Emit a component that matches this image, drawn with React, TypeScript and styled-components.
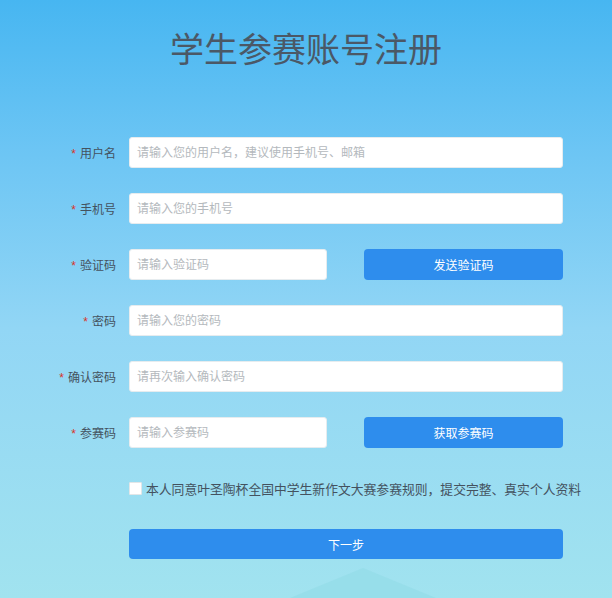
import React, { useState } from "react";
import styled, { createGlobalStyle } from "styled-components";

const GlobalStyle = createGlobalStyle`
  html, body {
    margin: 0;
    padding: 0;
  }
  body {
    font-family: "Liberation Sans", "Noto Sans CJK SC", sans-serif;
  }
  * {
    box-sizing: border-box;
  }
`;

const Page = styled.div`
  position: relative;
  width: 612px;
  height: 598px;
  overflow: hidden;
  background: linear-gradient(180deg, #47b6f1 0%, #6cc5f4 25%, #92d6f5 55%, #a1e3ef 100%);
`;

const Backdrop = styled.svg`
  position: absolute;
  left: 0;
  bottom: 0;
  width: 612px;
  height: 40px;
  pointer-events: none;
`;

const Title = styled.h1`
  margin: 0;
  padding-top: 31px;
  text-align: center;
  font-size: 34px;
  line-height: 38px;
  font-weight: 400;
  color: #4b5866;
`;

const Form = styled.form`
  position: relative;
  display: flex;
  flex-direction: column;
  gap: 25px;
  padding: 68px 0 0;
`;

const Row = styled.div`
  display: grid;
  grid-template-columns: 116px 434px;
  column-gap: 13px;
  align-items: center;
  height: 31px;
`;

const Label = styled.label`
  text-align: right;
  font-size: 12px;
  color: #44525f;
  white-space: nowrap;
`;

const Star = styled.span`
  color: #d8352a;
  margin-right: 4px;
  font-size: 12px;
`;

const Field = styled.div<{ $split?: boolean }>`
  display: grid;
  grid-template-columns: ${(p) => (p.$split ? "198px 199px" : "1fr")};
  justify-content: space-between;
  height: 31px;
`;

const Input = styled.input`
  height: 31px;
  width: 100%;
  border: 1px solid #e6ecef;
  border-radius: 3px;
  background: #fff;
  padding: 0 7px;
  font-family: inherit;
  font-size: 12px;
  color: #333;
  outline: none;

  &::placeholder {
    color: #b4b9bd;
  }
`;

const Button = styled.button<{ $tall?: boolean }>`
  height: ${(p) => (p.$tall ? "31px" : "30px")};
  border: none;
  border-radius: 4px;
  background: #2e8ded;
  color: #fff;
  font-family: inherit;
  font-size: 12px;
  cursor: pointer;
`;

const AgreeRow = styled.div`
  display: flex;
  align-items: center;
  gap: 4px;
  height: 14px;
  margin: 33px 0 0 129px;
  font-size: 12.8px;
  color: #44525f;
  white-space: nowrap;
`;

const Check = styled.span<{ $on: boolean }>`
  display: inline-block;
  flex: none;
  width: 13px;
  height: 13px;
  background: #fff;
  border: 1px solid #e2e6e8;
  border-radius: 1px;
  cursor: pointer;
  text-align: center;
  line-height: 11px;
  font-size: 10px;
  color: #2e8ded;
`;

const Submit = styled(Button)`
  display: block;
  width: 434px;
  margin: 34px 0 0 129px;
  height: 30px;
`;

const fields = [
  { label: "用户名", placeholder: "请输入您的用户名，建议使用手机号、邮箱" },
  { label: "手机号", placeholder: "请输入您的手机号" },
  { label: "验证码", placeholder: "请输入验证码", action: "发送验证码" },
  { label: "密码", placeholder: "请输入您的密码" },
  { label: "确认密码", placeholder: "请再次输入确认密码" },
  { label: "参赛码", placeholder: "请输入参赛码", action: "获取参赛码" },
];

export default function App() {
  const [agree, setAgree] = useState(false);

  return (
    <Page>
      <GlobalStyle />
      <Backdrop viewBox="0 0 612 40">
        <polygon points="363,10 290,40 436,40" fill="#8fdbe6" opacity="0.55" />
      </Backdrop>
      <Title>学生参赛账号注册</Title>
      <Form onSubmit={(e) => e.preventDefault()}>
        {fields.map((f) => (
          <Row key={f.label}>
            <Label>
              <Star>*</Star>
              {f.label}
            </Label>
            <Field $split={!!f.action}>
              <Input placeholder={f.placeholder} />
              {f.action && (
                <Button type="button" $tall>
                  {f.action}
                </Button>
              )}
            </Field>
          </Row>
        ))}
      </Form>
      <AgreeRow>
        <Check $on={agree} onClick={() => setAgree(!agree)}>
          {agree ? "✓" : ""}
        </Check>
        本人同意叶圣陶杯全国中学生新作文大赛参赛规则，提交完整、真实个人资料
      </AgreeRow>
      <Submit type="button">下一步</Submit>
    </Page>
  );
}
